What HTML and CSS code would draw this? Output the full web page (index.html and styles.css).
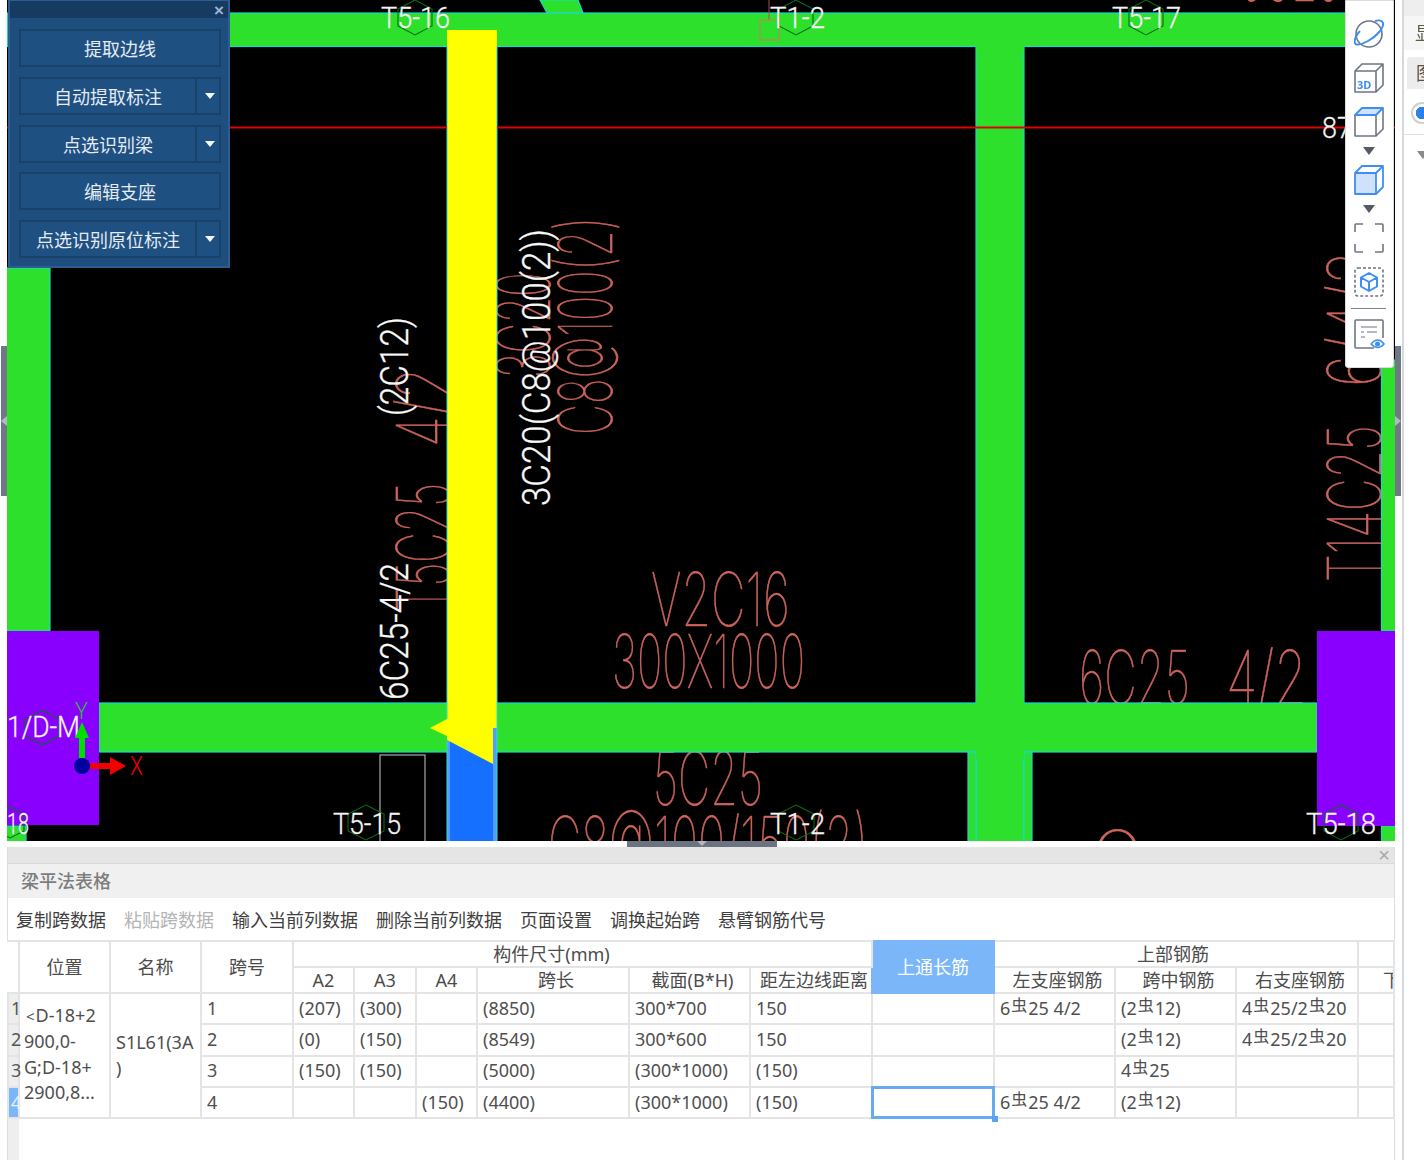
FILE: index.html
```html
<!DOCTYPE html>
<html lang="zh-CN">
<head>
<meta charset="utf-8">
<title>梁平法表格</title>
<link rel="stylesheet" href="styles.css">
</head>
<body>
<div class="app">
  <div class="main">
    <div class="top">
      <div class="gutter"><div class="handle-v"><i class="tri-left"></i></div></div>
      <div class="canvas">
        <svg class="cad" width="1388" height="841" viewBox="7 0 1388 841">
          <rect class="bg" x="7" y="0" width="1388" height="841"/>
          <g class="cad-red">
            <text transform="translate(450,612) rotate(-90)" textLength="129" lengthAdjust="spacingAndGlyphs">T5C25</text>
            <text transform="translate(450,447) rotate(-90)" textLength="80" lengthAdjust="spacingAndGlyphs">4/2</text>
            <text transform="translate(550,378) rotate(-90)" textLength="106" lengthAdjust="spacingAndGlyphs">3C20</text>
            <text transform="translate(612,435) rotate(-90)" textLength="218" lengthAdjust="spacingAndGlyphs">C8@100(2)</text>
            <text transform="translate(1381,582) rotate(-90)" textLength="157" lengthAdjust="spacingAndGlyphs">T14C25</text>
            <text transform="translate(1381,387) rotate(-90)" textLength="137" lengthAdjust="spacingAndGlyphs">6/4/2</text>
            <text x="651" y="626" textLength="139" lengthAdjust="spacingAndGlyphs">V2C16</text>
            <text x="612" y="688" textLength="193" lengthAdjust="spacingAndGlyphs">300X1000</text>
            <text x="1079" y="704" textLength="111" lengthAdjust="spacingAndGlyphs">6C25</text>
            <text x="1226" y="704" textLength="81" lengthAdjust="spacingAndGlyphs">4/2</text>
            <text x="653" y="805" textLength="110" lengthAdjust="spacingAndGlyphs">5C25</text>
            <text x="548" y="870" textLength="320" lengthAdjust="spacingAndGlyphs">C8@100/150(2)</text>
            <text x="1090" y="884" textLength="55" lengthAdjust="spacingAndGlyphs">0</text>
            <text x="1240" y="1" textLength="100" lengthAdjust="spacingAndGlyphs">6C25</text>
          </g>
          <g class="beam">
            <polygon points="540,0 547,13 583,13 578,0"/>
            <rect x="7" y="13" width="1345" height="33.5"/>
            <rect x="976" y="46" width="48" height="657"/>
            <rect x="-2" y="268" width="52" height="363"/>
            <rect x="1381.5" y="360" width="20" height="271"/>
            <rect x="1381.5" y="826" width="20" height="20"/>
            <rect x="99" y="703" width="1218" height="49"/>
            <rect x="976" y="752" width="48" height="94"/>
            <rect x="968" y="752" width="8" height="94"/>
            <rect x="1024" y="752" width="8" height="94"/>
            <rect x="-2" y="826" width="28" height="20"/>
          </g>
          <rect class="fill-green" x="976" y="40" width="48" height="12"/>
          <rect class="fill-green" x="976" y="698" width="48" height="60"/>
          <rect class="purple" x="7" y="631" width="92" height="194"/>
          <rect class="purple" x="1317" y="631" width="78" height="195"/>
          <rect class="outline-grey" x="380" y="755" width="45" height="90"/>
          <rect class="blue" x="447" y="728" width="50" height="113"/>
          <rect class="side-blue" x="447" y="730" width="3" height="111"/>
          <rect class="side-blue" x="493" y="728" width="4" height="113"/>
          <polygon class="yellow" points="447,30 497,30 497,728 493,728 493,764 447,740 447,736 430,728 447,719"/>
          <line class="cyan" x1="447" y1="46" x2="447" y2="719"/>
          <line class="cyan" x1="497" y1="46" x2="497" y2="841"/>
          <line class="cyan" x1="447" y1="740" x2="447" y2="841"/>
          <rect class="red-line" x="7" y="126.500" width="440" height="2"/>
          <rect class="red-line" x="497" y="126.500" width="898" height="2"/>
          <line class="thin-red" x1="769" y1="0" x2="769" y2="20"/>
          <rect class="pick" x="760" y="20" width="19" height="20"/>
          <g class="hex">
            <polygon points="415,0 432,9 432,26 415,35 398,26 398,9"/>
            <polygon points="796,0 813,9 813,26 796,35 779,26 779,9"/>
            <polygon points="1146,0 1163,9 1163,26 1146,35 1129,26 1129,9"/>
            <polygon points="42,710 59,719 59,736 42,745 25,736 25,719"/>
            <polygon points="366,805 384,814 384,831 366,840 348,831 348,814"/>
            <polygon points="796,805 814,814 814,831 796,840 778,831 778,814"/>
            <polygon points="1341,805 1358,814 1358,831 1341,840 1324,831 1324,814"/>
            <polygon points="10,807 24,814 24,831 10,838 -4,831 -4,814"/>
          </g>
          <g class="cad-white">
            <text x="381" y="28" textLength="69" lengthAdjust="spacingAndGlyphs">T5-16</text>
            <text x="770" y="28" textLength="55" lengthAdjust="spacingAndGlyphs">T1-2</text>
            <text x="1112" y="28" textLength="69" lengthAdjust="spacingAndGlyphs">T5-17</text>
            <text x="1322" y="138" textLength="30" lengthAdjust="spacingAndGlyphs">87</text>
            <text x="333" y="834" textLength="68" lengthAdjust="spacingAndGlyphs">T5-15</text>
            <text x="770" y="834" textLength="55" lengthAdjust="spacingAndGlyphs">T1-2</text>
            <text x="1306" y="834" textLength="70" lengthAdjust="spacingAndGlyphs">T5-18</text>
            <text x="7" y="737" textLength="73" lengthAdjust="spacingAndGlyphs">1/D-M</text>
            <text x="7" y="834" textLength="22" lengthAdjust="spacingAndGlyphs">18</text>
          </g>
          <g class="cad-white-lg">
            <text transform="translate(408,416) rotate(-90)" textLength="99" lengthAdjust="spacingAndGlyphs">(2C12)</text>
            <text transform="translate(550,506) rotate(-90)" textLength="277" lengthAdjust="spacingAndGlyphs">3C20(C8@100(2))</text>
            <text transform="translate(408,700) rotate(-90)" textLength="137" lengthAdjust="spacingAndGlyphs">6C25-4/2</text>
          </g>
          <rect class="axis-g" x="79" y="738" width="6" height="20"/>
          <polygon class="axis-g" points="82,722 89,738 75,738"/>
          <rect class="axis-r" x="90" y="763" width="20" height="6"/>
          <polygon class="axis-r" points="126,766 110,757 110,775"/>
          <circle class="axis-b" cx="82" cy="766" r="8"/>
          <text class="label-y" x="75" y="719" textLength="13" lengthAdjust="spacingAndGlyphs">Y</text>
          <text class="label-x" x="130" y="775" textLength="13" lengthAdjust="spacingAndGlyphs">X</text>
        </svg>

        <div class="float-panel">
          <div class="float-title"><span class="float-close">×</span></div>
          <div class="float-body">
            <div class="fbtn"><span class="fbtn-main">提取边线</span></div>
            <div class="fbtn"><span class="fbtn-main">自动提取标注</span><span class="fbtn-drop"><i class="tri-white"></i></span></div>
            <div class="fbtn"><span class="fbtn-main">点选识别梁</span><span class="fbtn-drop"><i class="tri-white"></i></span></div>
            <div class="fbtn"><span class="fbtn-main">编辑支座</span></div>
            <div class="fbtn"><span class="fbtn-main">点选识别原位标注</span><span class="fbtn-drop"><i class="tri-white"></i></span></div>
          </div>
        </div>

        <div class="view-tools">
          <svg class="vicon" viewBox="0 0 32 32"><circle class="ig" cx="16" cy="16" r="13"/><path class="ib2" d="M2 24C1 28 8 27 15 23C24 18 31 10 30 5C29 2 25 2 22 3M2 24C1 21 4 16 7 13"/></svg>
          <svg class="vicon" viewBox="0 0 32 32"><path class="ig" d="M2 9L9 2H30V23L23 30H2ZM2 9H23V30M23 9L30 2"/><text class="icon3d" x="4" y="27">3D</text></svg>
          <svg class="vicon" viewBox="0 0 32 32"><path class="ig" d="M2 9H23V30H2ZM23 30L30 23V2"/><path class="ibf" d="M2 9L9 2H30L23 9Z"/></svg>
          <i class="tri-grey"></i>
          <svg class="vicon" viewBox="0 0 32 32"><path class="ibf" d="M2 9H23V30H2Z"/><path class="ibn" d="M2 9L9 2H30V23L23 30M23 9L30 2"/></svg>
          <i class="tri-grey"></i>
          <svg class="vicon" viewBox="0 0 32 32"><path class="ig" d="M2 10V3Q2 2 3 2H10M22 2H29Q30 2 30 3V10M30 22V29Q30 30 29 30H22M10 30H3Q2 30 2 29V22"/></svg>
          <svg class="vicon" viewBox="0 0 32 32"><rect class="igd" x="2" y="2" width="28" height="28" rx="3"/><path class="ib2" d="M16 7L24 11.500V20.500L16 25L8 20.500V11.500ZM8 11.500L16 16L24 11.500M16 16V25"/></svg>
          <div class="vsep"></div>
          <svg class="vicon" viewBox="0 0 32 32"><path class="ig" d="M21 30H3Q2 30 2 29V3Q2 2 3 2H29Q30 2 30 3V20"/><path class="ig1" d="M8 9H24M8 14H11M14 14H24M8 19H12"/><path class="ib" d="M18 26Q25 18 31 26Q25 33 18 26Z"/><circle class="ibs" cx="24.500" cy="26" r="2.500"/></svg>
        </div>
      </div>
    </div>

    <div class="hsplit"><div class="handle-h"><i class="tri-down"></i></div></div>

    <div class="bottom">
      <div class="gutter"></div>
      <section class="sheet">
        <div class="sheet-bar"><span class="sheet-close">×</span></div>
        <div class="sheet-title">梁平法表格</div>
        <div class="sheet-tools">
          <span>复制跨数据</span><span class="disabled">粘贴跨数据</span><span>输入当前列数据</span><span>删除当前列数据</span><span>页面设置</span><span>调换起始跨</span><span>悬臂钢筋代号</span>
        </div>
        <div class="grid-wrap">
          <table class="grid">
            <colgroup>
              <col class="c11"><col class="c91"><col class="c91"><col class="c92"><col class="c61"><col class="c62"><col class="c61"><col class="c152"><col class="c121"><col class="c122"><col class="c122"><col class="c121"><col class="c121"><col class="c122"><col class="c36">
            </colgroup>
            <thead>
              <tr>
                <th rowspan="2"></th>
                <th rowspan="2">位置</th>
                <th rowspan="2">名称</th>
                <th rowspan="2">跨号</th>
                <th colspan="6" class="shift-left">构件尺寸(mm)</th>
                <th rowspan="2" class="hl">上通长筋</th>
                <th colspan="3" class="shift-slight">上部钢筋</th>
                <th></th>
              </tr>
              <tr>
                <th>A2</th><th>A3</th><th>A4</th>
                <th class="shift-right">跨长</th><th class="shift-right">截面(B*H)</th><th class="shift-right">距左边线距离</th>
                <th class="shift-right">左支座钢筋</th><th class="shift-right">跨中钢筋</th><th class="shift-right">右支座钢筋</th>
                <th class="clip">下部钢筋</th>
              </tr>
            </thead>
            <tbody>
              <tr>
                <td class="num">1</td>
                <td rowspan="4" class="pos"><span class="lt">&lt;</span>D-18+2<br>900,0-<br>G;D-18+<br>2900,8...</td>
                <td rowspan="4">S1L61(3A<br>)</td>
                <td>1</td><td>(207)</td><td>(300)</td><td></td><td>(8850)</td><td>300*700</td><td>150</td><td></td>
                <td>6<span class="bar">虫</span>25 4/2</td><td>(2<span class="bar">虫</span>12)</td><td>4<span class="bar">虫</span>25/2<span class="bar">虫</span>20</td><td></td>
              </tr>
              <tr>
                <td class="num">2</td>
                <td>2</td><td>(0)</td><td>(150)</td><td></td><td>(8549)</td><td>300*600</td><td>150</td><td></td>
                <td></td><td>(2<span class="bar">虫</span>12)</td><td>4<span class="bar">虫</span>25/2<span class="bar">虫</span>20</td><td></td>
              </tr>
              <tr>
                <td class="num">3</td>
                <td>3</td><td>(150)</td><td>(150)</td><td></td><td>(5000)</td><td>(300*1000)</td><td>(150)</td><td></td>
                <td></td><td>4<span class="bar">虫</span>25</td><td></td><td></td>
              </tr>
              <tr>
                <td class="num current">4</td>
                <td>4</td><td></td><td></td><td>(150)</td><td>(4400)</td><td>(300*1000)</td><td>(150)</td><td class="selected"><i class="fill-handle"></i></td>
                <td>6<span class="bar">虫</span>25 4/2</td><td>(2<span class="bar">虫</span>12)</td><td></td><td></td>
              </tr>
            </tbody>
          </table>
        </div>
      </section>
    </div>
  </div>

  <aside class="right">
    <div class="vsplit"><div class="handle-v"><i class="tri-right"></i></div></div>
    <div class="side">
      <div class="side-top"></div>
      <div class="side-head">显</div>
      <div class="side-tab">图</div>
      <div class="side-radio"><i class="radio"></i></div>
      <div class="side-drop"><i class="tri-grey"></i></div>
    </div>
  </aside>
</div>
</body>
</html>
```

FILE: styles.css
```css
* { box-sizing: border-box; }
html, body { margin: 0; padding: 0; background: #fff; }
body { font-family: "Noto Sans", "Noto Sans CJK SC", sans-serif; color: #4a4a4a; overflow: hidden; }
i { display: block; }

.app { display: flex; width: 1424px; height: 1160px; overflow: hidden; filter: blur(0.35px); }
.main { width: 1395px; display: flex; flex-direction: column; }
.top { display: flex; height: 841px; }
.gutter { width: 7px; flex: none; background: #fff; display: flex; align-items: center; justify-content: flex-end; }
.handle-v { width: 6px; height: 150px; background: #6f7884; display: flex; align-items: center; justify-content: center; }
.tri-left { border: 5px solid transparent; border-left-width: 0; border-right: 6px solid #b4b8bd; }
.tri-right { border: 5px solid transparent; border-right-width: 0; border-left: 6px solid #b4b8bd; }

.canvas { position: relative; width: 1388px; height: 841px; overflow: hidden; background: #000; }
.cad { display: block; }
.bg { fill: #000; }
.beam rect, .beam polygon { fill: #2ce02c; stroke: #19d8d0; stroke-width: 1.2; }
.fill-green { fill: #2ce02c; }
.purple { fill: #8a00ff; }
.yellow { fill: #ffff00; }
.blue { fill: #156fff; }
.side-blue { fill: #4f9dff; }
.cyan { stroke: #36d8d0; stroke-width: 1; }
.outline-grey { fill: none; stroke: #a8a8a8; stroke-width: 1.2; }
.red-line { fill: #e00000; }
.thin-red { stroke: #b04a44; stroke-width: 1; }
.pick { fill: none; stroke: #b98a5a; stroke-width: 1.3; }
.hex polygon { fill: none; stroke: #0b6a12; stroke-width: 1.1; }
.cad-red text { font-family: Inter, Roboto, sans-serif; font-weight: 100; font-size: 74px; fill: #d2665e; stroke: #c8605a; stroke-width: 0.7; }
.cad-white text { font-family: Roboto, "Noto Sans", sans-serif; font-weight: 300; font-size: 29px; fill: #f4f4f4; stroke: #f4f4f4; stroke-width: 0.3; }
.cad-white-lg text { font-family: Roboto, "Noto Sans", sans-serif; font-weight: 300; font-size: 38px; fill: #f8f8f8; stroke: #f8f8f8; stroke-width: 0.3; }
.axis-g { fill: #00e000; }
.axis-r { fill: #f00000; }
.axis-b { fill: #00009c; }
.label-y { font-family: Roboto, sans-serif; font-weight: 300; font-size: 24px; fill: #1fc81f; }
.label-x { font-family: Roboto, sans-serif; font-weight: 300; font-size: 26px; fill: #f00000; }

.float-panel { position: absolute; left: 1px; top: 0; width: 222px; height: 268px; background: #1e4e7e; border: 2px solid #2b5d92; border-top-width: 1px; display: flex; flex-direction: column; }
.float-title { height: 17px; background: #173b60; display: flex; align-items: center; justify-content: flex-end; padding: 2px 4px 0 0; flex: none; }
.float-close { color: #9db6d2; font-size: 17px; font-weight: 700; line-height: 1; font-family: "Liberation Sans", sans-serif; }
.float-body { display: flex; flex-direction: column; gap: 9.750px; padding: 11px 7px 0 9px; }
.fbtn { display: flex; height: 38px; border: 2px solid #1a4269; background: #1f5082; color: #e4ebf3; font-size: 18px; font-family: "Noto Sans CJK SC", sans-serif; }
.fbtn-main { flex: 1; display: flex; align-items: center; justify-content: center; }
.fbtn-drop { width: 24px; flex: none; border-left: 2px solid #1a4269; display: flex; align-items: center; justify-content: center; padding-left: 3px; }
.tri-white { border: 5.500px solid transparent; border-bottom-width: 0; border-top: 6px solid #f4f7fa; }

.view-tools { position: absolute; right: 1px; top: 0; width: 49px; height: 368px; background: #fff; border: 1px solid #dcdcdc; border-radius: 0 0 3px 3px; display: flex; flex-direction: column; align-items: center; gap: 9px; padding: 17px 2px 0 0; }
.vicon { width: 32px; height: 32px; flex: none; display: block; margin-top: 3px; }
.vicon:first-child, .tri-grey + .vicon, .vsep + .vicon { margin-top: 0; }
.ig { fill: none; stroke: #6f7682; stroke-width: 1.6; stroke-linejoin: round; }
.ig1 { fill: none; stroke: #6f7682; stroke-width: 1.200; }
.igd { fill: none; stroke: #6f7682; stroke-width: 1.6; stroke-dasharray: 3 2; }
.ib { fill: #fff; stroke: #3f8ff2; stroke-width: 1.6; stroke-linejoin: round; }
.ibn { fill: none; stroke: #3f8ff2; stroke-width: 1.8; stroke-linejoin: round; }
.ib2 { fill: none; stroke: #3f8ff2; stroke-width: 2; stroke-linejoin: round; }
.ibf { fill: #cfe1fb; stroke: #3f8ff2; stroke-width: 1.8; stroke-linejoin: round; }
.ibs { fill: #3f8ff2; }
.icon3d { font-family: "Noto Sans", sans-serif; font-weight: 700; font-size: 11px; fill: #3f8ff2; }
.tri-grey { border: 6px solid transparent; border-bottom-width: 0; border-top: 8px solid #555b66; flex: none; }
.vsep { width: 35px; height: 1px; background: #7d828a; flex: none; margin-top: 1px; }

.hsplit { height: 6px; flex: none; display: flex; justify-content: center; background: #fff; }
.handle-h { width: 150px; height: 6px; background: #6b7480; margin-left: 9px; display: flex; justify-content: center; }
.tri-down { border: 5px solid transparent; border-bottom-width: 0; border-top: 5px solid #b4b8bd; }

.bottom { flex: 1; display: flex; min-height: 0; }
.sheet { flex: 1; min-width: 0; border-left: 1px solid #dedede; border-right: 1px solid #dedede; display: flex; flex-direction: column; background: #fff; }
.sheet-bar { height: 17px; background: #e5e5e5; border-bottom: 1px solid #d9d9d9; display: flex; justify-content: flex-end; align-items: center; padding-right: 4px; flex: none; }
.sheet-close { font-family: "Liberation Sans", sans-serif; font-size: 20px; line-height: 1; color: #a6a6a6; }
.sheet-title { height: 34px; background: #f0f0f0; color: #7d7d7d; font-family: "Noto Sans CJK SC", sans-serif; font-size: 18px; font-weight: 500; line-height: 33px; padding-left: 13px; flex: none; }
.sheet-tools { height: 42px; background: #fff; display: flex; gap: 18px; align-items: center; padding-left: 8px; font-family: "Noto Sans CJK SC", sans-serif; font-size: 18px; color: #3f3f3f; flex: none; }
.sheet-tools .disabled { color: #b4b4b4; }

.grid-wrap { flex: 1; min-height: 0; background: linear-gradient(to right, #eeeeee 11px, #fff 11px); }
.grid { table-layout: fixed; border-collapse: collapse; width: 1386px; margin-left: -1px; background: #fff; font-size: 18px; }
.c11 { width: 11px; } .c36 { width: 36px; } .c61 { width: 61px; } .c62 { width: 62px; }
.c91 { width: 91px; } .c92 { width: 92px; } .c121 { width: 121px; } .c122 { width: 122px; } .c152 { width: 152px; }
.grid th, .grid td { border: 2px solid #e4e4e4; padding: 0; font-weight: 400; overflow: hidden; white-space: nowrap; }
.grid th { font-family: "Noto Sans", "Noto Sans CJK SC", sans-serif; text-align: center; height: 26px; line-height: 22px; color: #4c4c4c; font-size: 18px; }
.grid td { height: 31.250px; line-height: 25.700px; padding-left: 5px; color: #4f4f4f; }
.grid tr > th:first-child { border-left-color: transparent; }
.grid th.hl { background: #7bb6f8; color: #fff; border-color: #7bb6f8; }
.shift-left { padding-right: 62px !important; }
.shift-slight { padding-right: 6px !important; }
.shift-right { padding-left: 6px !important; }
.grid th.clip { text-align: left; padding-left: 24px; }
.grid td.num { padding: 0 0 0 2px; background: #eeeeee; font-size: 18px; overflow: visible; color: #555; }
.grid td.num.current { background: #7bb6f8; color: #e8f2fe; }
.grid td.pos { padding-left: 4px; padding-bottom: 2px; }
.lt { font-size: 15px; line-height: 1; margin: 0 1px 0 2px; }
.bar { font-family: "Noto Sans CJK SC", sans-serif; font-size: 16px; vertical-align: 4px; line-height: 1; margin: 0 1px; }
.grid td.selected { position: relative; overflow: visible; outline: 3px solid #68aaf0; outline-offset: -2px; }
.fill-handle { position: absolute; right: -5px; bottom: -5px; width: 6px; height: 6px; background: #5aa3f0; }

.right { width: 29px; flex: none; display: flex; }
.vsplit { width: 6px; flex: none; display: flex; align-items: flex-start; background: #fff; padding-top: 346px; }
.side { flex: 1; min-width: 0; border-left: 2px solid #d5d8dc; margin-left: 1px; display: flex; flex-direction: column; overflow: hidden; font-family: "Noto Sans CJK SC", sans-serif; font-size: 18px; white-space: nowrap; }
.side-top { height: 16px; background: #eeeeee; flex: none; }
.side-head { height: 34px; background: #f6f6f6; flex: none; padding-left: 11px; line-height: 33px; color: #5f5a45; }
.side-tab { height: 32px; margin: 7px 0 0 3px; background: #ececec; border-radius: 3px 0 0 0; padding-left: 9px; line-height: 31px; color: #5f5040; flex: none; }
.side-radio { height: 46px; flex: none; padding: 13px 0 0 7px; border-bottom: 1px solid #e2e2e2; }
.radio { width: 22px; height: 22px; border-radius: 50%; border: 2px solid #cfcfcf; background: radial-gradient(circle, #2f7fe8 0 6px, #fff 6.500px); }
.side-drop { padding: 16px 0 0 13px; }
.side-drop .tri-grey { border-top-color: #8a8a8a; width: 0; }
```
